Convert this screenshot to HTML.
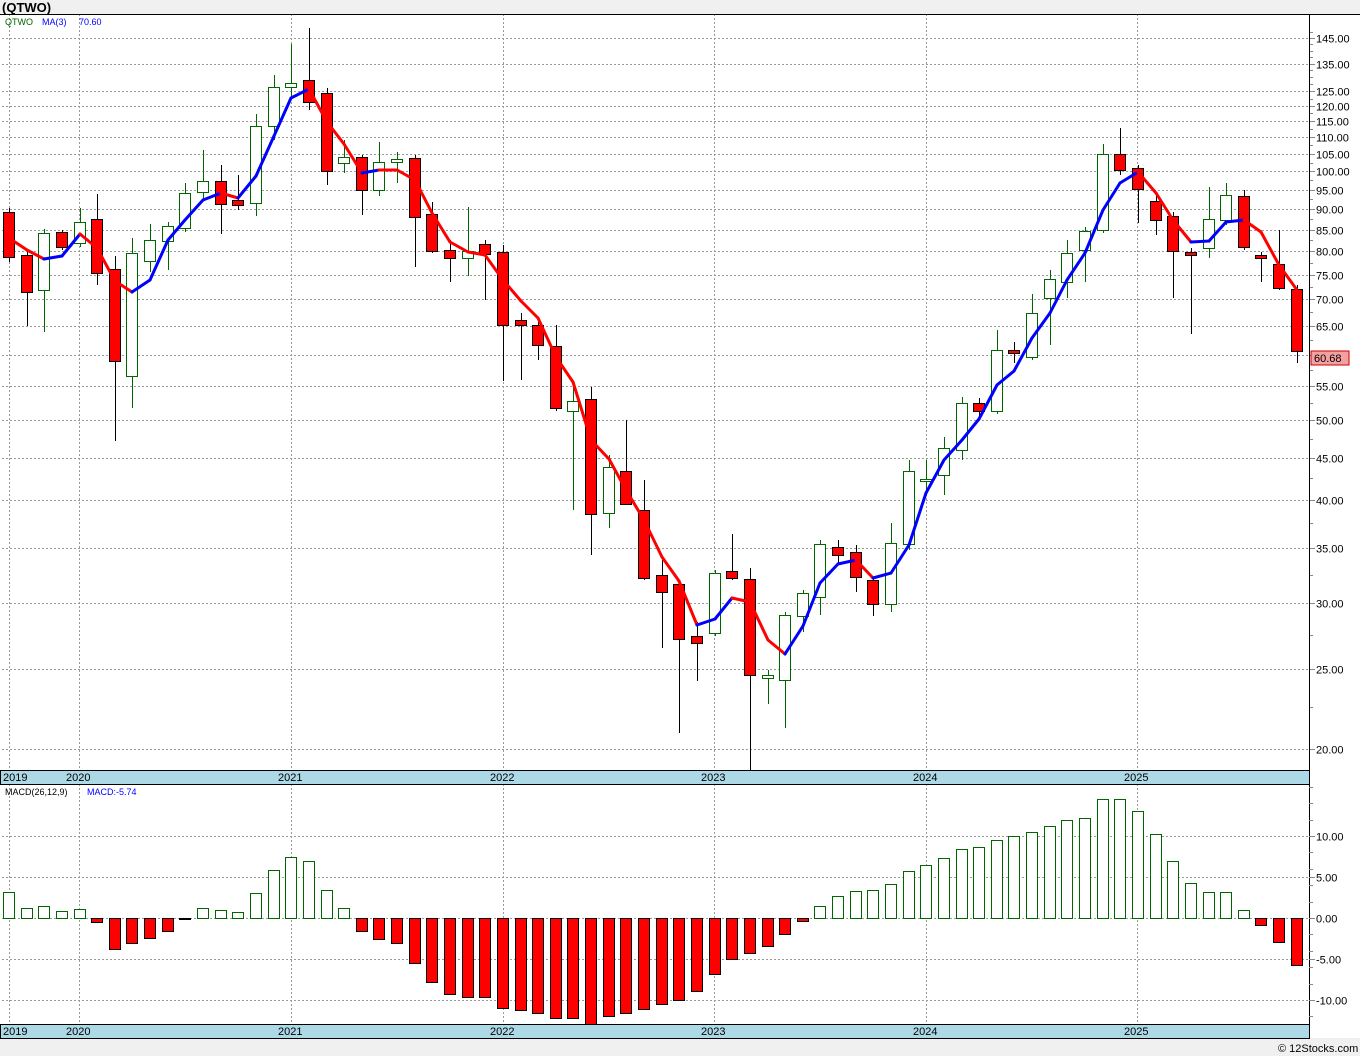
<!DOCTYPE html>
<html><head><meta charset="utf-8"><style>
html,body{margin:0;padding:0;background:#f0f0f0;}
svg{display:block;font-family:"Liberation Sans",sans-serif;}
</style></head><body>
<svg id="s" width="1360" height="1056" xmlns="http://www.w3.org/2000/svg">
<rect x="0" y="14" width="1309" height="1024" fill="#fff"/>
<rect x="1309" y="14" width="51" height="1024" fill="#fff"/>
<text x="2" y="12" font-size="13" font-weight="bold" fill="#000">(QTWO)</text>
<g id="g"></g>
<text x="1278" y="1052" font-size="11" fill="#000">© 12Stocks.com</text>
</svg>
<script>
var g=document.getElementById('g'),h='';
function L(x1,y1,x2,y2,c,w,d){h+='<line x1="'+x1+'" y1="'+y1+'" x2="'+x2+'" y2="'+y2+'" stroke="'+c+'" stroke-width="'+(w||1)+'"'+(d?' stroke-dasharray="'+d+'"':'')+'/>';}
function T(x,y,t,c,s){h+='<text x="'+x+'" y="'+y+'" font-size="'+(s||11)+'" fill="'+(c||'#000')+'">'+t+'</text>';}
function yp(p){return 749-(Math.log(p)-Math.log(20))*358.9;}
var prices=[145,135,125,120,115,110,105,100,95,90,85,80,75,70,65,60,55,50,45,40,35,30,25,20];
prices.forEach(function(p){var y=Math.round(yp(p))+0.5;L(2,y,1309,y,'#999',1,'2,2');L(1309,y,1315,y,'#888');T(1316,y+4,p.toFixed(2));});
for(var p=20;p<150;p+=2.5){var y=Math.round(yp(p))+0.5;L(1309,y,1313,y,'#888');}
var years=[[9,'2019'],[79,'2020'],[291,'2021'],[503,'2022'],[714,'2023'],[926,'2024'],[1137,'2025']];
years.forEach(function(a){L(a[0]+.5,14,a[0]+.5,770,'#999',1,'2,2');L(a[0]+.5,784,a[0]+.5,1024,'#999',1,'2,2');});
// candles
var C=[[212,257,208,262,'r'],[255,292,252,326,'r'],[233,290,229,332,'w'],[232,247,230,250,'r'],[222,243,208,247,'w'],[219,273,194,285,'r'],[269,361,256,441,'r'],[253,376,238,408,'w'],[240,261,224,272,'w'],[226,241,222,270,'w'],[193,228,183,232,'w'],[181,192,150,200,'w'],[181,204,165,234,'r'],[200,205,175,210,'r'],[126,203,114,216,'w'],[87,126,75,140,'w'],[83,87,44,98,'w'],[80,102,28,110,'r'],[93,171,88,185,'r'],[157,163,140,173,'w'],[157,190,155,215,'r'],[162,190,142,196,'w'],[159,162,152,183,'w'],[158,217,155,267,'r'],[214,251,202,253,'r'],[250,258,240,282,'r'],[251,258,207,276,'w'],[244,254,240,300,'r'],[252,325,245,381,'r'],[320,325,313,380,'r'],[325,345,318,360,'r'],[346,408,325,411,'r'],[401,411,383,510,'w'],[399,514,387,555,'r'],[467,513,455,528,'w'],[471,504,420,505,'r'],[510,578,480,580,'r'],[575,592,560,648,'r'],[584,639,582,733,'r'],[636,643,622,681,'r'],[573,633,570,636,'w'],[571,578,534,580,'r'],[579,675,568,770,'r'],[675,678,670,704,'w'],[615,680,612,728,'w'],[593,616,590,632,'w'],[544,597,540,615,'w'],[547,555,540,563,'r'],[552,577,545,592,'r'],[580,604,578,616,'r'],[543,604,523,612,'w'],[471,544,460,550,'w'],[479,481,460,495,'w'],[448,475,437,495,'w'],[403,450,397,460,'w'],[403,411,398,420,'r'],[350,411,330,414,'w'],[350,353,342,363,'r'],[313,357,294,360,'w'],[279,298,270,345,'w'],[253,282,240,298,'w'],[231,250,227,282,'w'],[154,230,144,233,'w'],[154,170,128,175,'r'],[168,189,165,223,'r'],[201,220,192,235,'r'],[216,251,212,298,'r'],[252,255,248,334,'r'],[219,248,187,258,'w'],[195,220,183,225,'w'],[196,247,190,250,'r'],[255,258,252,282,'r'],[264,288,230,290,'r'],[289,351,285,363,'r']];
function cx(i){return Math.round(9+i*17.64);}
C.forEach(function(c,i){var x=cx(i);var col=c[4]=='r'?'#000':'#060';
L(x+.5,c[2],x+.5,c[3],col);
h+='<rect x="'+(x-5.5)+'" y="'+(c[0]+.5)+'" width="11" height="'+Math.max(2,c[1]-c[0])+'" fill="'+(c[4]=='r'?'#f00':'#fff')+'" stroke="'+col+'"/>';});
var M=[238,250,259,256,234,248,281,292,280,240,220,200,193,198,176,136,98,89,122,144,173,170,170,180,213,242,252,255,280,301,318,357,382,440,459,490,520,557,581,625,619,598,602,640,654,626,583,564,560,578,573,545,493,460,440,419,385,371,338,313,280,253,210,183,172,193,220,242,241,222,220,232,265,290];
M.forEach(function(y,i){if(i==0)return;var c=y<M[i-1]?'#00f':'#f00';h+='<line x1="'+cx(i-1)+'" y1="'+M[i-1]+'" x2="'+cx(i)+'" y2="'+y+'" stroke="'+c+'" stroke-width="3" stroke-linecap="round"/>';});
// price tag
h+='<rect x="1311" y="351" width="38" height="14" fill="#f4a0a0" stroke="#c00"/>';T(1314,362,'60.68');
// legend
T(5,25,'QTWO','#060',9);T(42,25,'MA(3)','#00f',9);T(79,25,'70.60','#00f',9);
// borders
L(0,14.5,1360,14.5,'#000');L(1309.5,14,1309.5,1038,'#000');
h+='<rect x="0.5" y="770.5" width="1309" height="14" fill="#add8e6" stroke="#000"/>';
h+='<rect x="0.5" y="1024.5" width="1309" height="14" fill="#add8e6" stroke="#000"/>';
years.forEach(function(a){var x=a[0]==9?3:a[0]-13;T(x,781,a[1]);T(x,1035,a[1]);});
// MACD
[10,5,0,-5,-10].forEach(function(v){var y=Math.round(918-v*8.2)+.5;L(2,y,1309,y,'#999',1,'2,2');L(1309,y,1315,y,'#888');T(1316,y+4,(v>=0?'':'')+v.toFixed(2));});
for(var v=-12;v<=16;v+=2){var y=Math.round(918-v*8.2)+.5;L(1309,y,1313,y,'#888');}
var D=[892,908,906,911,909,-922,-949,-943,-938,-931,-919,908,910,912,893,870,857,861,890,908,-931,-939,-943,-963,-982,-994,-997,-997,-1008,-1010,-1013,-1018,-1018,-1024,-1016,-1013,-1009,-1004,-1000,-991,-974,-959,-953,-946,-934,-921,906,896,891,890,884,871,865,858,849,847,840,836,832,826,820,818,799,799,811,834,861,883,892,892,910,-925,-942,-965];
D.forEach(function(v,i){var x=cx(i);if(v>0){h+='<rect x="'+(x-5.5)+'" y="'+(v+.5)+'" width="11" height="'+(918-v)+'" fill="#fff" stroke="#060"/>';}else{v=-v;h+='<rect x="'+(x-5.5)+'" y="918.5" width="11" height="'+(v-918)+'" fill="#f00" stroke="#000"/>';}});
T(5,795,'MACD(26,12,9)','#000',9);T(87,795,'MACD:-5.74','#00f',9);
L(0,784.5,1309,784.5,'#000');
g.innerHTML=h;
</script>
</body></html>
